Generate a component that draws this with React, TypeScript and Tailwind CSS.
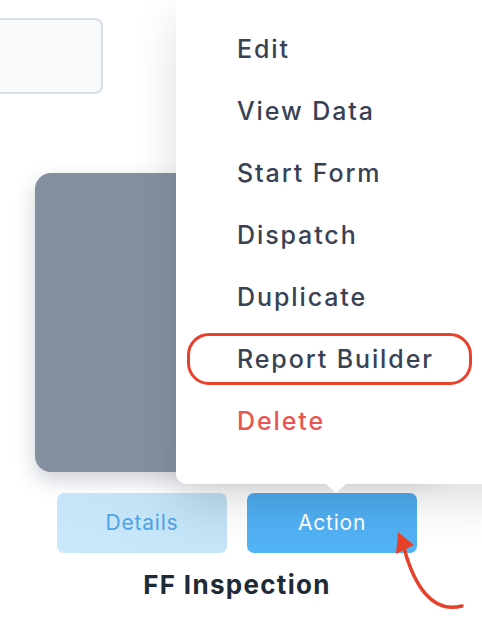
import React from 'react';

const menuItems = [
  { id: 'edit', label: 'Edit' },
  { id: 'view', label: 'View Data' },
  { id: 'start', label: 'Start Form' },
  { id: 'dispatch', label: 'Dispatch' },
  { id: 'duplicate', label: 'Duplicate' },
  { id: 'report', label: 'Report Builder', highlight: true },
  { id: 'delete', label: 'Delete', danger: true },
];

export default function App() {
  return (
    <div className="relative w-[482px] h-[620px] overflow-hidden bg-white font-['Inter',sans-serif]">
      {/* page content */}
      <div className="flex flex-col">
        <div className="mt-[18px] ml-[-40px] w-[143px] h-[76px] rounded-[8px] border-2 border-[#d9dfea] bg-[#f8f9fb]" />

        <div className="mt-[79px] ml-[35px] w-[404px] h-[299px] rounded-[16px] bg-[#848fa0] shadow-[0_8px_20px_rgba(60,70,100,0.25)]" />

        <div className="ml-[35px] w-[404px] mt-[21px] flex justify-center gap-[20px]">
          <button className="w-[170px] h-[60px] rounded-[7px] bg-gradient-to-bl from-[#c1e0f4] to-[#cbe9fd] text-[#4ca3e6] text-[21px] tracking-[0.8px]">
            Details
          </button>
          <button className="w-[170px] h-[60px] rounded-[7px] bg-gradient-to-b from-[#4eacee] to-[#53b3f7] text-white text-[21px] tracking-[0.8px]">
            Action
          </button>
        </div>

        <h2 className="ml-[35px] w-[404px] mt-[16px] text-center text-[26px] leading-[32px] font-bold tracking-[1.3px] text-[#1f2a37]">
          FF Inspection
        </h2>
      </div>

      {/* dropdown menu */}
      <div className="absolute top-0 left-[176px] w-[340px] pt-[19px] pb-[31px] bg-white rounded-bl-[10px] shadow-[0_18px_45px_rgba(0,0,0,0.13)]">
        {menuItems.map((item) => (
          <div key={item.id} className="relative h-[62px] flex items-center pl-[61px]">
            {item.highlight && (
              <div className="absolute left-[11px] top-[4px] w-[285px] h-[52px] rounded-[22px] border-[3px] border-[#e8402a]" />
            )}
            <span
              className={`text-[25px] font-medium tracking-[1.9px] ${
                item.danger ? 'text-[#eb5550]' : 'text-[#384254]'
              }`}
            >
              {item.label}
            </span>
          </div>
        ))}
        <div className="absolute left-[150px] bottom-[-9px] w-0 h-0 border-l-[10px] border-r-[10px] border-t-[9px] border-l-transparent border-r-transparent border-t-white" />
      </div>

      {/* annotation arrow */}
      <svg className="absolute left-0 top-0 pointer-events-none" width="482" height="620" viewBox="0 0 482 620">
        <path d="M404 548 C 414 585, 432 614, 462 606" fill="none" stroke="#e8412a" strokeWidth="3.5" strokeLinecap="round" />
        <polygon points="398,532 396,554 414,545" fill="#e8412a" />
      </svg>
    </div>
  );
}
